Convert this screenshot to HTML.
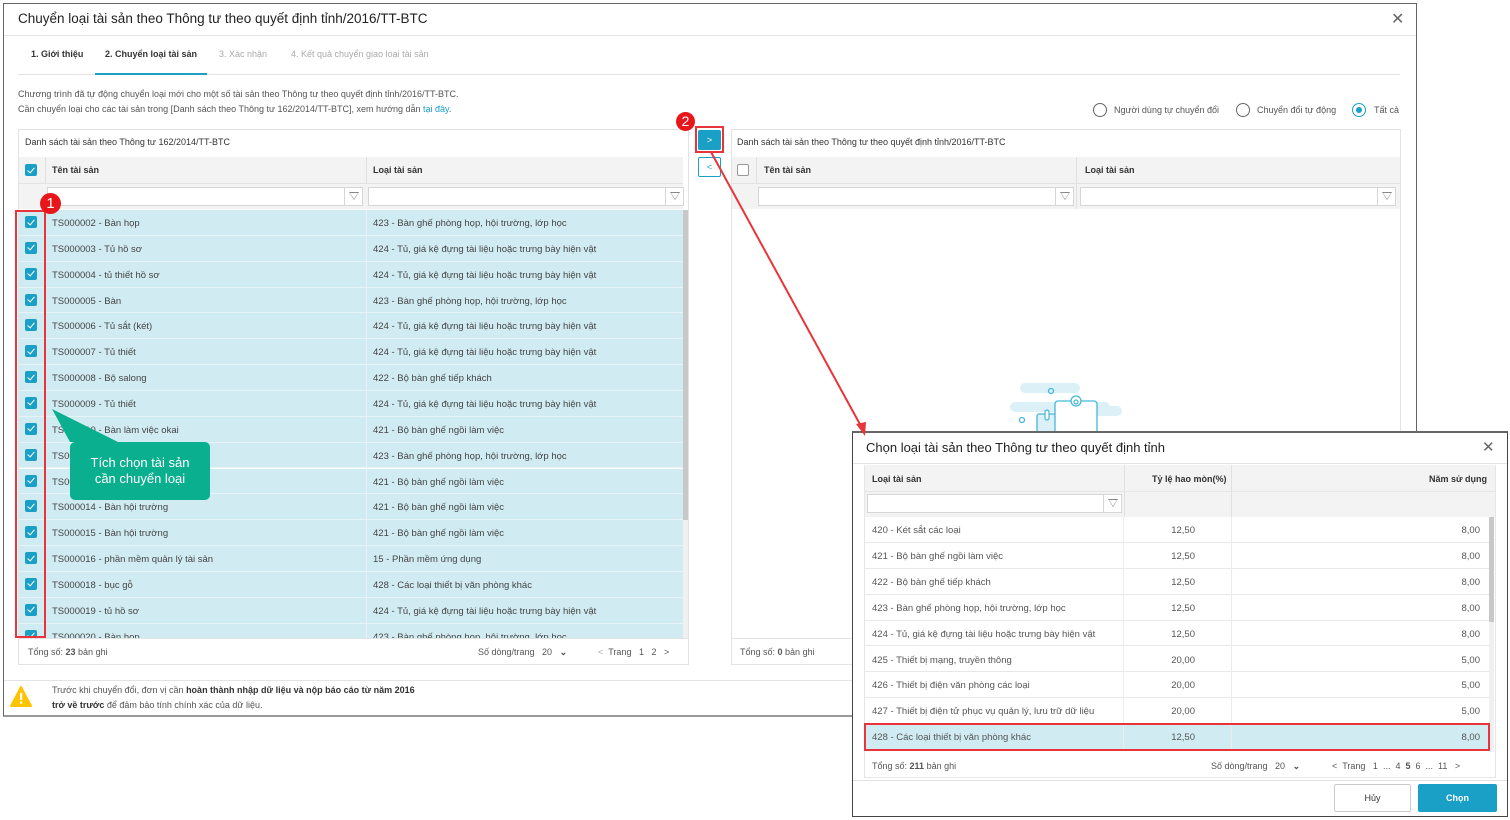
<!DOCTYPE html>
<html><head><meta charset="utf-8">
<style>
*{box-sizing:border-box;margin:0;padding:0}
body{width:1510px;height:820px;background:#fff;position:relative;overflow:hidden;font-family:"Liberation Sans",sans-serif;color:#333;font-size:9.5px}
.a{position:absolute;white-space:nowrap}
.dlg{position:absolute;left:3px;top:3px;width:1414px;height:714px;border:1px solid #666;border-bottom:2px solid #999;background:#fff}
.cb{position:absolute;width:12px;height:12px;background:#1a9fc7;border-radius:2px}
.cb:after{content:"";position:absolute;left:3.5px;top:1.5px;width:3px;height:6px;border:solid #fff;border-width:0 1.5px 1.5px 0;transform:rotate(40deg)}
.cbe{position:absolute;width:12px;height:12px;border:1px solid #999;border-radius:2px;background:#fff}
.inp{position:absolute;height:19px;border:1px solid #d6d6d6;background:#fff}
.inp i{position:absolute;right:0;top:0;width:18px;height:17px;border-left:1px solid #d6d6d6}
.inp i:after{content:"";position:absolute;left:4px;top:4px;width:0;height:0;border-left:5px solid transparent;border-right:5px solid transparent;border-top:8px solid #888}
.inp i:before{content:"";position:absolute;left:5px;top:5px;width:0;height:0;border-left:4px solid transparent;border-right:4px solid transparent;border-top:6px solid #fff;z-index:1}
.row{position:absolute;left:0;width:665px;height:25.85px;background:#d0ecf2;border-bottom:1px solid #e6f4f7}
.row span{position:absolute;top:8px;font-size:9.5px;color:#444}
.prow{position:absolute;left:0;width:625px;height:25.9px;border-bottom:1px solid #e8e8e8}
.prow span{position:absolute;top:8px;font-size:9.5px;color:#555}
.rad{position:absolute;width:14px;height:14px;border:1.5px solid #666;border-radius:50%}
</style></head><body>
<div class="dlg"></div>
<div class="a" style="left:18px;top:11px;font-size:13.5px;color:#222">Chuyển loại tài sản theo Thông tư theo quyết định tỉnh/2016/TT-BTC</div>
<div class="a" style="left:1391px;top:9px;font-size:16px;color:#666">✕</div>
<div class="a" style="left:4px;top:35px;width:1412px;height:1px;background:#e6e6e6"></div>
<div class="a" style="left:31px;top:49px;font-size:9px;color:#333;font-weight:bold">1. Giới thiệu</div>
<div class="a" style="left:105px;top:49px;font-size:9px;color:#333;font-weight:bold">2. Chuyển loại tài sản</div>
<div class="a" style="left:219px;top:49px;font-size:9px;color:#aaa">3. Xác nhận</div>
<div class="a" style="left:291px;top:49px;font-size:9px;color:#aaa">4. Kết quả chuyển giao loại tài sản</div>
<div class="a" style="left:18px;top:74px;width:1382px;height:1px;background:#e3e3e3"></div>
<div class="a" style="left:95px;top:73px;width:112px;height:2px;background:#1a9fc7"></div>
<div class="a" style="left:18px;top:89px;font-size:9px;color:#555">Chương trình đã tự động chuyển loại mới cho một số tài sản theo Thông tư theo quyết định tỉnh/2016/TT-BTC.</div>
<div class="a" style="left:18px;top:104px;font-size:9px;color:#555">Cần chuyển loại cho các tài sản trong [Danh sách theo Thông tư 162/2014/TT-BTC], xem hướng dẫn <span style="color:#1a9fc7">tại đây</span>.</div>
<div class="rad" style="left:1093px;top:103px"></div><div class="a" style="left:1114px;top:105px;font-size:9px;color:#555">Người dùng tự chuyển đổi</div>
<div class="rad" style="left:1236px;top:103px"></div><div class="a" style="left:1257px;top:105px;font-size:9px;color:#555">Chuyển đổi tự động</div>
<div class="rad" style="left:1352px;top:103px;border-color:#1a9fc7"><div style="position:absolute;left:2.5px;top:2.5px;width:6px;height:6px;border-radius:50%;background:#1a9fc7"></div></div><div class="a" style="left:1374px;top:105px;font-size:9px;color:#555">Tất cả</div>

<!-- left panel -->
<div class="a" style="left:18px;top:129px;width:671px;height:536px;border:1px solid #e3e3e3"></div>
<div class="a" style="left:25px;top:137px;font-size:9px;color:#333">Danh sách tài sản theo Thông tư 162/2014/TT-BTC</div>
<div class="a" style="left:19px;top:157px;width:664px;height:52px;background:#f3f3f3"></div>
<div class="a" style="left:45px;top:157px;width:1px;height:26px;background:#e0e0e0"></div>
<div class="a" style="left:366px;top:157px;width:1px;height:26px;background:#e0e0e0"></div>
<div class="a" style="left:19px;top:183px;width:664px;height:1px;background:#e3e3e3"></div>
<div class="cb" style="left:25px;top:164px"></div>
<div class="a" style="left:52px;top:165px;font-size:9px;font-weight:bold;color:#333">Tên tài sản</div>
<div class="a" style="left:373px;top:165px;font-size:9px;font-weight:bold;color:#333">Loại tài sản</div>
<div class="inp" style="left:47px;top:187px;width:316px"><i></i></div>
<div class="inp" style="left:368px;top:187px;width:316px"><i></i></div>
<div class="a" style="left:19px;top:210px;width:665px;height:428px;overflow:hidden">
<div class="row" style="top:0"><div class="cb" style="left:6px;top:6px"></div><span style="left:33px">TS000002 - Bàn họp</span><span style="left:354px">423 - Bàn ghế phòng họp, hội trường, lớp học</span></div>
<div class="row" style="top:25.85px"><div class="cb" style="left:6px;top:6px"></div><span style="left:33px">TS000003 - Tủ hồ sơ</span><span style="left:354px">424 - Tủ, giá kệ đựng tài liệu hoặc trưng bày hiện vật</span></div>
<div class="row" style="top:51.7px"><div class="cb" style="left:6px;top:6px"></div><span style="left:33px">TS000004 - tủ thiết hồ sơ</span><span style="left:354px">424 - Tủ, giá kệ đựng tài liệu hoặc trưng bày hiện vật</span></div>
<div class="row" style="top:77.55px"><div class="cb" style="left:6px;top:6px"></div><span style="left:33px">TS000005 - Bàn</span><span style="left:354px">423 - Bàn ghế phòng họp, hội trường, lớp học</span></div>
<div class="row" style="top:103.4px"><div class="cb" style="left:6px;top:6px"></div><span style="left:33px">TS000006 - Tủ sắt (két)</span><span style="left:354px">424 - Tủ, giá kệ đựng tài liệu hoặc trưng bày hiện vật</span></div>
<div class="row" style="top:129.25px"><div class="cb" style="left:6px;top:6px"></div><span style="left:33px">TS000007 - Tủ thiết</span><span style="left:354px">424 - Tủ, giá kệ đựng tài liệu hoặc trưng bày hiện vật</span></div>
<div class="row" style="top:155.1px"><div class="cb" style="left:6px;top:6px"></div><span style="left:33px">TS000008 - Bộ salong</span><span style="left:354px">422 - Bộ bàn ghế tiếp khách</span></div>
<div class="row" style="top:180.95px"><div class="cb" style="left:6px;top:6px"></div><span style="left:33px">TS000009 - Tủ thiết</span><span style="left:354px">424 - Tủ, giá kệ đựng tài liệu hoặc trưng bày hiện vật</span></div>
<div class="row" style="top:206.8px"><div class="cb" style="left:6px;top:6px"></div><span style="left:33px">TS000010 - Bàn làm việc okai</span><span style="left:354px">421 - Bộ bàn ghế ngồi làm việc</span></div>
<div class="row" style="top:232.65px"><div class="cb" style="left:6px;top:6px"></div><span style="left:33px">TS000011 - Bàn</span><span style="left:354px">423 - Bàn ghế phòng họp, hội trường, lớp học</span></div>
<div class="row" style="top:258.5px"><div class="cb" style="left:6px;top:6px"></div><span style="left:33px">TS000012 - Bàn</span><span style="left:354px">421 - Bộ bàn ghế ngồi làm việc</span></div>
<div class="row" style="top:284.35px"><div class="cb" style="left:6px;top:6px"></div><span style="left:33px">TS000014 - Bàn hội trường</span><span style="left:354px">421 - Bộ bàn ghế ngồi làm việc</span></div>
<div class="row" style="top:310.2px"><div class="cb" style="left:6px;top:6px"></div><span style="left:33px">TS000015 - Bàn hội trường</span><span style="left:354px">421 - Bộ bàn ghế ngồi làm việc</span></div>
<div class="row" style="top:336.05px"><div class="cb" style="left:6px;top:6px"></div><span style="left:33px">TS000016 - phần mềm quản lý tài sản</span><span style="left:354px">15 - Phần mềm ứng dụng</span></div>
<div class="row" style="top:361.9px"><div class="cb" style="left:6px;top:6px"></div><span style="left:33px">TS000018 - bục gỗ</span><span style="left:354px">428 - Các loại thiết bị văn phòng khác</span></div>
<div class="row" style="top:387.75px"><div class="cb" style="left:6px;top:6px"></div><span style="left:33px">TS000019 - tủ hồ sơ</span><span style="left:354px">424 - Tủ, giá kệ đựng tài liệu hoặc trưng bày hiện vật</span></div>
<div class="row" style="top:413.6px"><div class="cb" style="left:6px;top:6px"></div><span style="left:33px">TS000020 - Bàn họp</span><span style="left:354px">423 - Bàn ghế phòng họp, hội trường, lớp học</span></div>
<div class="a" style="left:26px;top:0;width:1px;height:428px;background:#e6f4f7"></div>
<div class="a" style="left:347px;top:0;width:1px;height:428px;background:#e6f4f7"></div>
</div>
<div class="a" style="left:683px;top:210px;width:5px;height:428px;background:#f0f0f0"></div>
<div class="a" style="left:683px;top:210px;width:5px;height:310px;background:#c8c8c8"></div>
<div class="a" style="left:19px;top:638px;width:669px;height:1px;background:#e3e3e3"></div>
<div class="a" style="left:28px;top:647px;font-size:9px;color:#555">Tổng số: <b>23</b> bản ghi</div>
<div class="a" style="left:478px;top:647px;font-size:9px;color:#555">Số dòng/trang &nbsp; 20 &nbsp; <b>⌄</b></div>
<div class="a" style="left:598px;top:647px;font-size:9px;color:#555"><span style="color:#aaa">&lt;</span> &nbsp;Trang &nbsp; 1 &nbsp; 2 &nbsp; &gt;</div>

<!-- buttons -->
<div class="a" style="left:698px;top:130px;width:23px;height:20px;background:#1a9fc7;border-radius:2px;color:#fff;font-size:9px;text-align:center;line-height:20px">&gt;</div>
<div class="a" style="left:695px;top:126px;width:29px;height:27px;border:2px solid #e8343a"></div>
<div class="a" style="left:698px;top:157px;width:23px;height:20px;border:1px solid #1a9fc7;border-radius:2px;color:#1a9fc7;font-size:9px;text-align:center;line-height:18px">&lt;</div>
<div class="a" style="left:676px;top:112px;width:19px;height:19px;border-radius:50%;background:#e8161b;color:#fff;font-size:14px;text-align:center;line-height:19px">2</div>

<!-- right panel -->
<div class="a" style="left:731px;top:129px;width:670px;height:536px;border:1px solid #e3e3e3"></div>
<div class="a" style="left:737px;top:137px;font-size:9px;color:#333">Danh sách tài sản theo Thông tư theo quyết định tỉnh/2016/TT-BTC</div>
<div class="a" style="left:732px;top:157px;width:668px;height:52px;background:#f3f3f3"></div>
<div class="a" style="left:756px;top:157px;width:1px;height:26px;background:#e0e0e0"></div>
<div class="a" style="left:1076px;top:157px;width:1px;height:52px;background:#e0e0e0"></div>
<div class="a" style="left:732px;top:183px;width:668px;height:1px;background:#e3e3e3"></div>
<div class="cbe" style="left:737px;top:164px"></div>
<div class="a" style="left:764px;top:165px;font-size:9px;font-weight:bold;color:#333">Tên tài sản</div>
<div class="a" style="left:1085px;top:165px;font-size:9px;font-weight:bold;color:#333">Loại tài sản</div>
<div class="inp" style="left:758px;top:187px;width:316px"><i></i></div>
<div class="inp" style="left:1080px;top:187px;width:316px"><i></i></div>
<svg class="a" style="left:1010px;top:375px" width="115" height="60" viewBox="0 0 115 60">
<rect x="10" y="8" width="60" height="10" rx="5" fill="#dcf0f7"/><rect x="0" y="27" width="100" height="10" rx="5" fill="#dcf0f7"/><rect x="70" y="31" width="42" height="10" rx="5" fill="#dcf0f7"/>
<circle cx="41" cy="16" r="2.5" fill="none" stroke="#45b7d8" stroke-width="1.3"/><circle cx="12" cy="45" r="2.5" fill="none" stroke="#45b7d8" stroke-width="1.3"/>
<rect x="27" y="39" width="21" height="30" rx="2" fill="#dcf0f7" stroke="#45b7d8" stroke-width="1.3"/>
<rect x="45" y="26" width="42" height="40" rx="3" fill="#fff" stroke="#45b7d8" stroke-width="1.3"/>
<circle cx="66" cy="26" r="5" fill="#fff" stroke="#45b7d8" stroke-width="1.3"/><circle cx="66" cy="27" r="2" fill="none" stroke="#45b7d8" stroke-width="1.2"/>
<rect x="35" y="35" width="4" height="10" rx="2" fill="#fff" stroke="#45b7d8" stroke-width="1.2"/>
</svg>
<div class="a" style="left:732px;top:638px;width:668px;height:1px;background:#e3e3e3"></div>
<div class="a" style="left:740px;top:647px;font-size:9px;color:#555">Tổng số: <b>0</b> bản ghi</div>

<!-- warning -->
<div class="a" style="left:4px;top:680px;width:1412px;height:1px;background:#e3e3e3"></div>
<svg class="a" style="left:10px;top:686px" width="22" height="22" viewBox="0 0 22 22"><path d="M11 1 L21 20 L1 20 Z" fill="#ffc400" stroke="#ffc400" stroke-linejoin="round" stroke-width="2"/><rect x="10" y="7" width="2.2" height="7" fill="#fff"/><rect x="10" y="15.5" width="2.2" height="2.2" fill="#fff"/></svg>
<div class="a" style="left:52px;top:685px;font-size:9px;color:#555">Trước khi chuyển đổi, đơn vị cần <b style="color:#333">hoàn thành nhập dữ liệu và nộp báo cáo từ năm 2016</b></div>
<div class="a" style="left:52px;top:700px;font-size:9px;color:#555"><b style="color:#333">trở về trước</b> để đảm bảo tính chính xác của dữ liệu.</div>

<!-- annotation 1 -->
<div class="a" style="left:15px;top:210px;width:31px;height:428px;border:2px solid #e8343a"></div>
<div class="a" style="left:40px;top:193px;width:21px;height:21px;border-radius:50%;background:#e8161b;color:#fff;font-size:15px;text-align:center;line-height:21px">1</div>
<svg class="a" style="left:48px;top:405px" width="170" height="100"><path d="M4 4 L70 37 L22 37 Z" fill="#0aaf8f"/><rect x="22" y="37" width="140" height="58" rx="5" fill="#0aaf8f"/></svg>
<div class="a" style="left:70px;top:455px;width:140px;text-align:center;color:#fff;font-size:13px;line-height:16px;white-space:normal">Tích chọn tài sản<br>cần chuyển loại</div>

<!-- popup -->
<div class="a" style="left:852px;top:431px;width:656px;height:386px;background:#fff;border:1px solid #444;border-top:2px solid #666"></div>
<div class="a" style="left:866px;top:440px;font-size:13px;color:#222">Chọn loại tài sản theo Thông tư theo quyết định tỉnh</div>
<div class="a" style="left:1482px;top:438px;font-size:15px;color:#666">✕</div>
<div class="a" style="left:853px;top:463px;width:654px;height:1px;background:#e3e3e3"></div>
<div class="a" style="left:864px;top:465px;width:632px;height:313px;border:1px solid #e6e6e6"></div>
<div class="a" style="left:865px;top:465px;width:630px;height:52px;background:#f3f3f3"></div>
<div class="a" style="left:1124px;top:465px;width:1px;height:52px;background:#e0e0e0"></div>
<div class="a" style="left:1231px;top:465px;width:1px;height:52px;background:#e0e0e0"></div>
<div class="a" style="left:865px;top:491px;width:630px;height:1px;background:#e6e6e6"></div>
<div class="a" style="left:872px;top:474px;font-size:9px;font-weight:bold;color:#333">Loại tài sản</div>
<div class="a" style="left:1152px;top:474px;font-size:9px;font-weight:bold;color:#333">Tỷ lệ hao mòn(%)</div>
<div class="a" style="left:1429px;top:474px;font-size:9px;font-weight:bold;color:#333">Năm sử dụng</div>
<div class="inp" style="left:867px;top:494px;width:255px"><i></i></div>
<div class="a" style="left:865px;top:517px;width:625px;height:235px">
<div class="prow" style="top:0"><span style="left:7px">420 - Két sắt các loại</span><span style="right:295px">12,50</span><span style="right:10px">8,00</span></div>
<div class="prow" style="top:25.9px"><span style="left:7px">421 - Bộ bàn ghế ngồi làm việc</span><span style="right:295px">12,50</span><span style="right:10px">8,00</span></div>
<div class="prow" style="top:51.8px"><span style="left:7px">422 - Bộ bàn ghế tiếp khách</span><span style="right:295px">12,50</span><span style="right:10px">8,00</span></div>
<div class="prow" style="top:77.7px"><span style="left:7px">423 - Bàn ghế phòng họp, hội trường, lớp học</span><span style="right:295px">12,50</span><span style="right:10px">8,00</span></div>
<div class="prow" style="top:103.6px"><span style="left:7px">424 - Tủ, giá kệ đựng tài liệu hoặc trưng bày hiện vật</span><span style="right:295px">12,50</span><span style="right:10px">8,00</span></div>
<div class="prow" style="top:129.5px"><span style="left:7px">425 - Thiết bị mạng, truyền thông</span><span style="right:295px">20,00</span><span style="right:10px">5,00</span></div>
<div class="prow" style="top:155.4px"><span style="left:7px">426 - Thiết bị điện văn phòng các loại</span><span style="right:295px">20,00</span><span style="right:10px">5,00</span></div>
<div class="prow" style="top:181.3px"><span style="left:7px">427 - Thiết bị điện tử phục vụ quản lý, lưu trữ dữ liệu</span><span style="right:295px">20,00</span><span style="right:10px">5,00</span></div>
<div class="prow" style="top:207.2px;background:#d0ecf2"><span style="left:7px">428 - Các loại thiết bị văn phòng khác</span><span style="right:295px">12,50</span><span style="right:10px">8,00</span></div>
<div class="a" style="left:258px;top:0;width:1px;height:233px;background:#ececec"></div>
<div class="a" style="left:366px;top:0;width:1px;height:233px;background:#ececec"></div>
</div>
<div class="a" style="left:1489px;top:517px;width:5px;height:235px;background:#f0f0f0"></div>
<div class="a" style="left:1489px;top:517px;width:5px;height:105px;background:#c8c8c8"></div>
<div class="a" style="left:864px;top:723px;width:626px;height:28px;border:2px solid #e8343a"></div>
<div class="a" style="left:872px;top:761px;font-size:9px;color:#555">Tổng số: <b>211</b> bản ghi</div>
<div class="a" style="left:1211px;top:761px;font-size:9px;color:#555">Số dòng/trang &nbsp; 20 &nbsp; <b>⌄</b></div>
<div class="a" style="left:1332px;top:761px;font-size:9px;color:#555">&lt; &nbsp;Trang &nbsp; 1 &nbsp;... &nbsp;4 &nbsp;<b>5</b> &nbsp;6 &nbsp;... &nbsp;11 &nbsp; &gt;</div>
<div class="a" style="left:853px;top:780px;width:654px;height:1px;background:#e3e3e3"></div>
<div class="a" style="left:1334px;top:784px;width:77px;height:28px;border:1px solid #ccc;border-radius:2px;text-align:center;line-height:26px;font-size:9px;color:#333">Hủy</div>
<div class="a" style="left:1418px;top:784px;width:79px;height:28px;background:#1a9fc7;border-radius:2px;text-align:center;line-height:28px;font-size:9px;color:#fff;font-weight:bold">Chọn</div>

<!-- arrow -->
<svg class="a" style="left:0;top:0" width="1510" height="820"><line x1="711" y1="152" x2="862" y2="428" stroke="#e8343a" stroke-width="2"/><path d="M865 436 L856 424 L866 422 Z" fill="#e8343a"/></svg>
</body></html>
